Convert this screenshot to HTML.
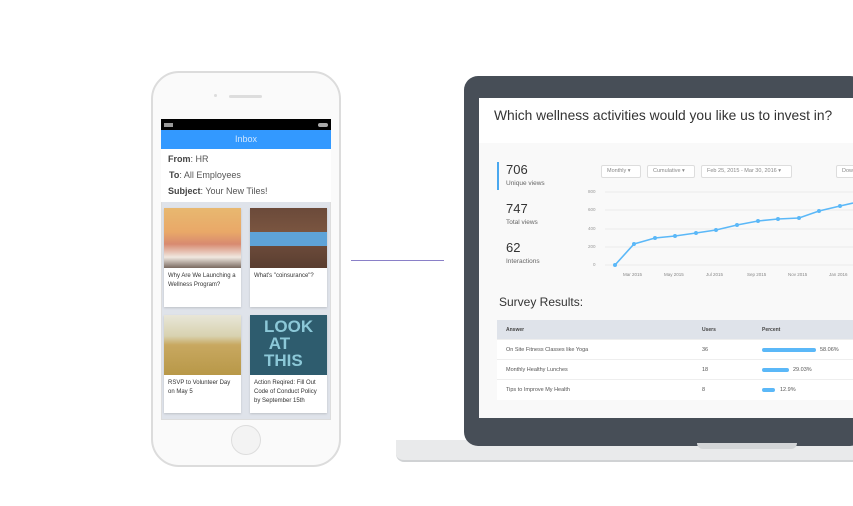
<!DOCTYPE html>
<html><head><meta charset="utf-8"><style>
*{margin:0;padding:0;box-sizing:border-box}
body{width:853px;height:506px;background:#fff;position:relative;overflow:hidden;font-family:"Liberation Sans",sans-serif}
.a{position:absolute}
.t{font-size:6px;color:#333;line-height:9px}
.card{position:absolute;background:#fff;box-shadow:0 1px 2px rgba(0,0,0,.15)}
.dd{position:absolute;top:165px;height:13px;border:1px solid #ddd;background:#fff;border-radius:2px;font-size:5.5px;color:#888;line-height:11px;padding-left:5px}
.yl{position:absolute;left:588px;font-size:4.5px;color:#999}
.xl{position:absolute;top:272px;font-size:4.5px;color:#888}
.row{position:absolute;left:497px;width:356px;height:20px;background:#fff;border-bottom:1px solid #eee;font-size:5.5px;color:#555;line-height:20px}
</style></head><body>
<div class="a" style="left:151px;top:71px;width:190px;height:396px;border:2px solid #dcdcdc;border-radius:28px;background:#fafafa"></div>
<div class="a" style="left:214px;top:94px;width:3px;height:3px;border-radius:50%;background:#ddd"></div>
<div class="a" style="left:229px;top:95px;width:33px;height:3px;border-radius:2px;background:#ddd"></div>
<div class="a" style="left:161px;top:119px;width:170px;height:301px;background:#dfe3ea;border:1px solid #ddd"></div>
<div class="a" style="left:161px;top:119px;width:170px;height:11px;background:#000"></div>
<div class="a" style="left:164px;top:123px;width:9px;height:4px;background:#999"></div>
<div class="a" style="left:318px;top:123px;width:10px;height:4px;border-radius:2px;background:#aaa"></div>
<div class="a" style="left:161px;top:130px;width:170px;height:19px;background:#3399ff;color:#cfe6ff;font-size:9px;text-align:center;line-height:19px">Inbox</div>
<div class="a" style="left:161px;top:149px;width:170px;height:53px;background:#fff;font-size:9px;color:#555">
<div class="a" style="left:7px;top:5px"><b style="color:#444">From</b>: HR</div>
<div class="a" style="left:8px;top:21px"><b style="color:#444">To</b>: All Employees</div>
<div class="a" style="left:7px;top:37px"><b style="color:#444">Subject</b>: Your New Tiles!</div>
</div>
<div class="card" style="left:164px;top:208px;width:77px;height:99px"><div style="height:60px;background:linear-gradient(180deg,#e8b870 0%,#e9a868 40%,#d88a70 60%,#f0e8e0 82%,#7a6a60 100%)"></div><div class="t" style="padding:4px">Why Are We Launching a Wellness Program?</div></div>
<div class="card" style="left:250px;top:208px;width:77px;height:99px"><div style="height:60px;background:linear-gradient(180deg,#6b4a3a 0%,#7a5540 40%,#5ea3d8 40%,#5ea3d8 63%,#6b4a3a 63%,#5a3e30 100%)"></div><div class="t" style="padding:4px">What's "coinsurance"?</div></div>
<div class="card" style="left:164px;top:315px;width:77px;height:98px"><div style="height:60px;background:linear-gradient(180deg,#e8e6d8 0%,#d8d2b0 35%,#c8a860 50%,#b89848 100%)"></div><div class="t" style="padding:4px">RSVP to Volunteer Day on May 5</div></div>
<div class="card" style="left:250px;top:315px;width:77px;height:98px"><div style="height:60px;background:#2e5c6e;color:#8cc8d8;font-size:17px;font-weight:bold;line-height:17px;padding:3px 0 0 14px">LOOK<br>&nbsp;AT<br>THIS</div><div class="t" style="padding:4px">Action Reqired: Fill Out Code of Conduct Policy by September 15th</div></div>
<div class="a" style="left:231px;top:425px;width:30px;height:30px;border-radius:50%;border:1px solid #ddd;background:#f3f3f3"></div>
<div class="a" style="left:351px;top:260px;width:93px;height:1px;background:#8a80c8"></div>
<div class="a" style="left:396px;top:440px;width:457px;height:22px;background:#e9eaeb;border-radius:0 0 0 8px;border-bottom:2px solid #d0d2d4"></div>
<div class="a" style="left:464px;top:76px;width:400px;height:370px;background:#474e57;border-radius:14px"></div>
<div class="a" style="left:697px;top:443px;width:100px;height:6px;background:#d3d5d7;border-radius:0 0 8px 8px"></div>
<div class="a" style="left:479px;top:98px;width:374px;height:320px;background:#f9f9f9"></div>
<div class="a" style="left:479px;top:98px;width:374px;height:45px;background:#fff;font-size:13.8px;color:#333;padding:10px 0 0 15px;white-space:nowrap">Which wellness activities would you like us to invest in?</div>
<div class="a" style="left:497px;top:162px;width:2px;height:28px;background:#4aa8ef"></div>
<div class="a" style="left:506px;top:162px;font-size:13px;color:#333">706</div>
<div class="a" style="left:506px;top:180px;font-size:6.5px;color:#666">Unique views</div>
<div class="a" style="left:506px;top:201px;font-size:13px;color:#333">747</div>
<div class="a" style="left:506px;top:219px;font-size:6.5px;color:#666">Total views</div>
<div class="a" style="left:506px;top:240px;font-size:13px;color:#333">62</div>
<div class="a" style="left:506px;top:258px;font-size:6.5px;color:#666">Interactions</div>
<div class="dd" style="left:601px;width:40px">Monthly ▾</div>
<div class="dd" style="left:647px;width:48px">Cumulative ▾</div>
<div class="dd" style="left:701px;width:91px">Feb 25, 2015 - Mar 30, 2016 ▾</div>
<div class="dd" style="left:836px;width:30px">Dow</div>
<div class="yl" style="top:189px">800</div><div class="yl" style="top:207px">600</div><div class="yl" style="top:226px">400</div><div class="yl" style="top:244px">200</div><div class="yl" style="top:262px;left:593px">0</div>
<svg class="a" style="left:0;top:0" width="853" height="506">
<g stroke="#e6e6e6" stroke-width="0.7"><line x1="605" y1="192" x2="853" y2="192"/><line x1="605" y1="210" x2="853" y2="210"/><line x1="605" y1="229" x2="853" y2="229"/><line x1="605" y1="247" x2="853" y2="247"/><line x1="605" y1="265" x2="853" y2="265"/></g>
<polyline fill="none" stroke="#5bb8f8" stroke-width="1.6" points="615,265 634,244 655,238 675,236 696,233 716,230 737,225 758,221 778,219 799,218 819,211 840,206 853,203"/>
<g fill="#5bb8f8"><circle cx="615" cy="265" r="2"/><circle cx="634" cy="244" r="2"/><circle cx="655" cy="238" r="2"/><circle cx="675" cy="236" r="2"/><circle cx="696" cy="233" r="2"/><circle cx="716" cy="230" r="2"/><circle cx="737" cy="225" r="2"/><circle cx="758" cy="221" r="2"/><circle cx="778" cy="219" r="2"/><circle cx="799" cy="218" r="2"/><circle cx="819" cy="211" r="2"/><circle cx="840" cy="206" r="2"/></g>
</svg>
<div class="xl" style="left:623px">Mar 2015</div><div class="xl" style="left:664px">May 2015</div><div class="xl" style="left:706px">Jul 2015</div><div class="xl" style="left:747px">Sep 2015</div><div class="xl" style="left:788px">Nov 2015</div><div class="xl" style="left:829px">Jan 2016</div>
<div class="a" style="left:499px;top:295px;font-size:12px;color:#333">Survey Results:</div>
<div class="row" style="top:320px;background:#dfe3ea;font-size:5px;color:#444;font-weight:bold"><span class="a" style="left:9px">Answer</span><span class="a" style="left:205px">Users</span><span class="a" style="left:265px">Percent</span></div>
<div class="row" style="top:340px"><span class="a" style="left:9px">On Site Fitness Classes like Yoga</span><span class="a" style="left:205px">36</span><span class="a" style="left:265px;top:8px;width:54px;height:4px;border-radius:2px;background:#5bb8f8"></span><span class="a" style="left:323px">58.06%</span></div>
<div class="row" style="top:360px"><span class="a" style="left:9px">Monthly Healthy Lunches</span><span class="a" style="left:205px">18</span><span class="a" style="left:265px;top:8px;width:27px;height:4px;border-radius:2px;background:#5bb8f8"></span><span class="a" style="left:296px">29.03%</span></div>
<div class="row" style="top:380px;border:none"><span class="a" style="left:9px">Tips to Improve My Health</span><span class="a" style="left:205px">8</span><span class="a" style="left:265px;top:8px;width:13px;height:4px;border-radius:2px;background:#5bb8f8"></span><span class="a" style="left:283px">12.9%</span></div>
</body></html>
